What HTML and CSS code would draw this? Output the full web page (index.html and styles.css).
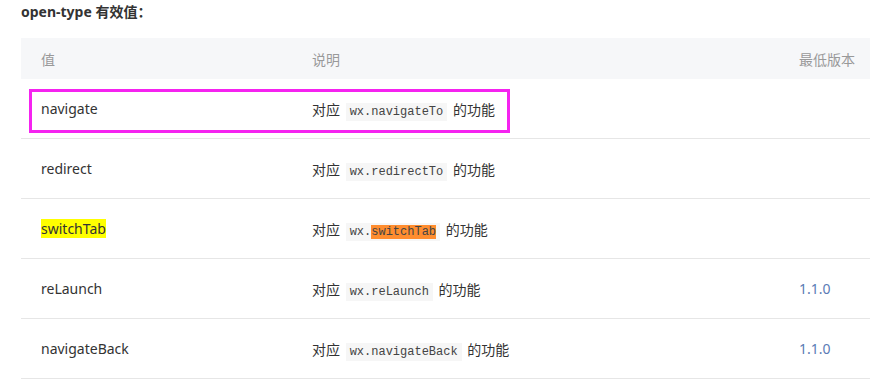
FILE: index.html
```html
<!DOCTYPE html>
<html>
<head>
<meta charset="utf-8">
<link rel="stylesheet" href="styles.css">
</head>
<body>
<div class="page">
  <h4 class="title">open-type 有效值：</h4>
  <div class="table-wrap">
    <table class="tbl">
      <colgroup>
        <col class="c1"><col class="c2"><col class="c3">
      </colgroup>
      <thead>
        <tr><th>值</th><th>说明</th><th>最低版本</th></tr>
      </thead>
      <tbody>
        <tr><td>navigate</td><td>对应 <code>wx.navigateTo</code> 的功能</td><td></td></tr>
        <tr><td>redirect</td><td>对应 <code>wx.redirectTo</code> 的功能</td><td></td></tr>
        <tr><td><span class="hl-yellow">switchTab</span></td><td>对应 <code>wx.<span class="hl-orange">switchTab</span></code> 的功能</td><td></td></tr>
        <tr><td>reLaunch</td><td>对应 <code>wx.reLaunch</code> 的功能</td><td class="ver">1.1.0</td></tr>
        <tr><td>navigateBack</td><td>对应 <code>wx.navigateBack</code> 的功能</td><td class="ver">1.1.0</td></tr>
      </tbody>
    </table>
    <div class="mark"></div>
  </div>
</div>
</body>
</html>
```
FILE: styles.css
```css
html, body {
  margin: 0;
  padding: 0;
  background: #fff;
}
body {
  font-family: "Noto Sans", "Noto Sans CJK SC", sans-serif;
  color: #333;
  font-size: 14px;
  overflow: hidden;
}
.page {
  padding-left: 21px;
}
.title {
  margin: 0;
  height: 38px;
  line-height: 24px;
  font-size: 14px;
  font-weight: 700;
  color: #333;
}
.table-wrap {
  position: relative;
  width: 849px;
}
.tbl {
  width: 849px;
  border-collapse: collapse;
  table-layout: fixed;
}
.c1 { width: 271px; }
.c2 { width: 487px; }
.c3 { width: 91px; }
.tbl th {
  background: #f6f7f9;
  height: 41px;
  padding: 0 0 0 20px;
  text-align: left;
  font-weight: 400;
  color: #999;
  font-size: 14px;
}
.tbl td {
  height: 59px;
  padding: 0 0 0 20px;
  border-bottom: 1px solid #e6e6e6;
  color: #333;
  font-size: 14px;
}
.tbl td.ver {
  color: #5a7bb5;
}
code {
  font-family: "Liberation Mono", "DejaVu Sans Mono", monospace;
  font-size: 12px;
  background: #f6f6f6;
  color: #444;
  padding: 2px 4px;
  margin: 0 2px;
}
.hl-yellow {
  background: #ffff00;
}
.hl-orange {
  background: #ff8d2f;
}
.mark {
  position: absolute;
  left: 8px;
  top: 51px;
  width: 475px;
  height: 38px;
  border: 3px solid #f523f0;
}
```
